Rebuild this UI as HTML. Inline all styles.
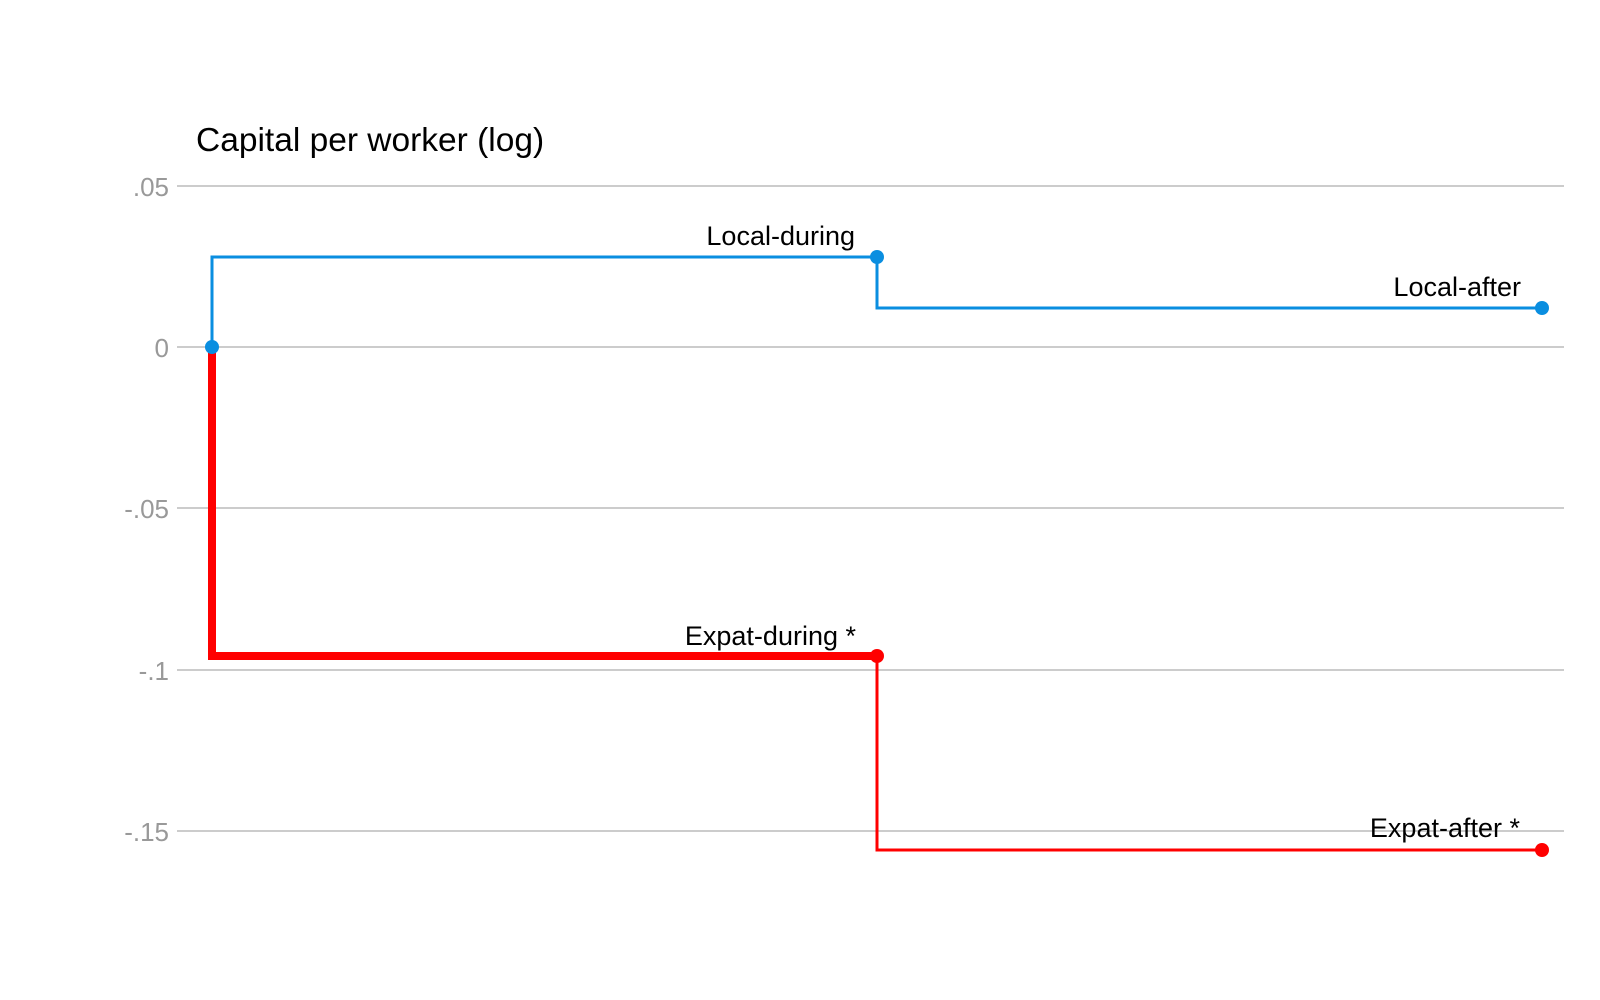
<!DOCTYPE html>
<html><head><style>html,body{margin:0;padding:0;background:#fff;}svg{display:block}</style></head>
<body>
<svg width="1600" height="1000" viewBox="0 0 1600 1000" xmlns="http://www.w3.org/2000/svg" font-family="Liberation Sans, Arial, sans-serif">
<g stroke="#cccccc" stroke-width="2">
<line x1="177" y1="186" x2="1564" y2="186"/>
<line x1="177" y1="347" x2="1564" y2="347"/>
<line x1="177" y1="508" x2="1564" y2="508"/>
<line x1="177" y1="670" x2="1564" y2="670"/>
<line x1="177" y1="831" x2="1564" y2="831"/>
</g>
<g fill="#999" font-size="26" text-anchor="end">
<text x="169" y="196">.05</text>
<text x="169" y="357">0</text>
<text x="169" y="518">-.05</text>
<text x="169" y="680">-.1</text>
<text x="169" y="841">-.15</text>
</g>
<text x="196" y="151" font-size="33.5" fill="#000">Capital per worker (log)</text>
<polyline points="212,347 212,257 877,257 877,308 1542,308" fill="none" stroke="#0a8ee0" stroke-width="3"/>
<polyline points="212,347 212,656 877,656" fill="none" stroke="#ff0000" stroke-width="8"/>
<polyline points="877,656 877,850 1542,850" fill="none" stroke="#ff0000" stroke-width="3"/>
<circle cx="212" cy="347" r="7" fill="#0a8ee0"/>
<circle cx="877" cy="257" r="7" fill="#0a8ee0"/>
<circle cx="1542" cy="308" r="7" fill="#0a8ee0"/>
<circle cx="877" cy="656" r="7" fill="#ff0000"/>
<circle cx="1542" cy="850" r="7" fill="#ff0000"/>
<g font-size="27" fill="#000" text-anchor="end">
<text x="855" y="245">Local-during</text>
<text x="1521" y="296">Local-after</text>
<text x="856" y="645">Expat-during *</text>
<text x="1520" y="837">Expat-after *</text>
</g>
</svg>
</body></html>
